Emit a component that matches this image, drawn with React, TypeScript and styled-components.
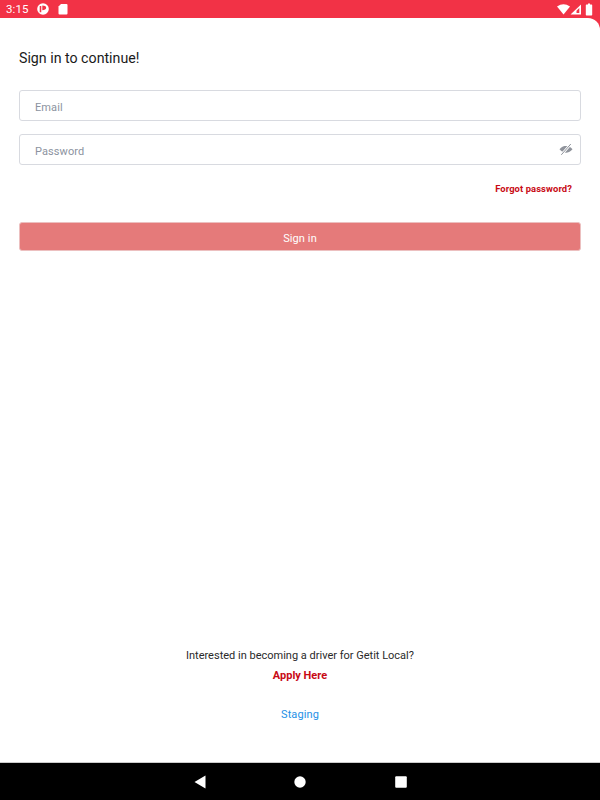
import React from "react";
import styled, { createGlobalStyle } from "styled-components";

const Global = createGlobalStyle`
  html, body { margin: 0; padding: 0; background: #000; }
  body { font-family: Roboto, "Liberation Sans", sans-serif; }
  #root { width: 600px; height: 800px; }
`;
const Screen = styled.div`
  width: 600px; height: 800px; display: flex; flex-direction: column; overflow: hidden;
  background: #f23246;
`;
const StatusBar = styled.div`
  height: 18px; flex: none; display: flex; align-items: center; padding: 0 6px; color: #fff; gap: 9px;
`;
const Time = styled.span`
  font-size: 11.5px; line-height: 18px; letter-spacing: 0.1px; width: 22px;
`;
const StatusRight = styled.div`
  margin-left: auto; display: flex; align-items: center;
`;
const Body = styled.main`
  flex: 1; background: #fff; border-top-right-radius: 12px; padding: 0 19px; display: flex; flex-direction: column;
  border-bottom: 1px solid #ccc;
`;
const Title = styled.h1`
  margin: 31px 0 0; font-size: 14.2px; line-height: 18px; font-weight: 400; color: #1a1a1a;
`;
const Field = styled.div<{ $top: number }>`
  margin-top: ${p => p.$top}px; border: 1px solid #d8dae0; border-radius: 3px; display: flex; align-items: center;
  padding: 0 7px 0 15px; flex: none; box-sizing: content-box; height: 29px;
`;
const Placeholder = styled.span`
  flex: 1; font-size: 11px; color: #8c93a0; letter-spacing: 0.1px; padding-top: 3px;
`;
const Forgot = styled.div`
  margin-top: 18px; align-self: flex-end; padding-right: 9px; font-size: 9.4px; line-height: 12px; font-weight: 700; color: #c80a14; letter-spacing: 0.1px;
`;
const SignIn = styled.button`
  margin-top: 27px; height: 29px; border: 1px solid #ecc0c0; border-radius: 3px; background: #e57a7a; color: #fff;
  font: 400 11px Roboto, sans-serif; letter-spacing: 0.1px; padding: 3px 0 0; flex: none;
`;
const Footer = styled.div`
  margin-top: auto; padding-bottom: 40px; display: flex; flex-direction: column; align-items: center;
`;
const Question = styled.div`
  font-size: 11px; line-height: 14px; color: #2a2a2a;
`;
const Apply = styled.div`
  margin-top: 6px; font-size: 11px; line-height: 14px; font-weight: 700; color: #c80a14;
`;
const Staging = styled.div`
  margin-top: 25px; font-size: 11px; line-height: 14px; color: #1e90e6; letter-spacing: 0.1px;
`;
const NavBar = styled.nav`
  height: 37px; flex: none; background: #000; display: flex; align-items: center; justify-content: center; gap: 88.5px;
`;
const Icon = styled.svg`
  display: block; flex: none;
`;
const Battery = styled(Icon)`
  margin-left: 3px;
`;

export default function App() {
  return (
    <Screen>
      <Global />
      <StatusBar>
        <Time>3:15</Time>
        <Icon width="12" height="12" viewBox="0 0 12 12">
          <circle cx="6" cy="6" r="5.8" fill="#fff" />
          <path d="M2.700 3h1.600v6.200H2.700z M5.300 2.600c2.300 0 3.900.8 3.900 2.200S7.500 7.300 5.300 7.300z" fill="#f23246" />
        </Icon>
        <Icon width="10" height="12" viewBox="0 0 10 12">
          <path d="M3 1h5.500A1 1 0 0 1 9.500 2v8.500a1 1 0 0 1-1 1h-7a1 1 0 0 1-1-1V3.500z" fill="#fff" />
        </Icon>
        <StatusRight>
          <Icon width="13" height="11" viewBox="0 0 13 11">
            <path d="M0 2.500Q6.500-2 13 2.500L6.500 10.500z" fill="#fff" />
          </Icon>
          <Icon width="12" height="11" viewBox="0 0 12 11">
            <path fillRule="evenodd" d="M0.500 10.500L11 0.500V10.500z M6.500 9H9.300V4L6.500 6.700z" fill="#fff" />
          </Icon>
          <Battery width="9" height="13" viewBox="0 0 9 13">
            <path d="M3 0.500h2v1h1.500a.7.7 0 0 1 .7.7v9.600a.7.7 0 0 1-.7.7H1.500a.7.7 0 0 1-.7-.7V2.200a.7.7 0 0 1 .7-.7H3z" fill="#fff" />
          </Battery>
        </StatusRight>
      </StatusBar>
      <Body>
        <Title>Sign in to continue!</Title>
        <Field $top={23}>
          <Placeholder>Email</Placeholder>
        </Field>
        <Field $top={13}>
          <Placeholder>Password</Placeholder>
          <Icon width="14" height="13" viewBox="0 0 14 13">
            <path d="M0.500 6.300C3 3.500 5 3 7 3s4 .5 6.500 3.300C11 9.100 9 9.800 7 9.800S3 9.100.5 6.300z" fill="#8f939b" />
            <path d="M2.300 11.800L11.800 1" stroke="#fff" strokeWidth="2.600" fill="none" />
            <path d="M2.300 11.800L11.800 1" stroke="#8f939b" strokeWidth="1" fill="none" />
          </Icon>
        </Field>
        <Forgot>Forgot password?</Forgot>
        <SignIn>Sign in</SignIn>
        <Footer>
          <Question>Interested in becoming a driver for Getit Local?</Question>
          <Apply>Apply Here</Apply>
          <Staging>Staging</Staging>
        </Footer>
      </Body>
      <NavBar>
        <Icon width="12" height="14" viewBox="0 0 12 14">
          <path d="M0.500 7L11.500 0.500V13.500z" fill="#fff" />
        </Icon>
        <Icon width="12" height="12" viewBox="0 0 12 12">
          <circle cx="6" cy="6" r="5.700" fill="#fff" />
        </Icon>
        <Icon width="12" height="12" viewBox="0 0 12 12">
          <rect x="0.200" y="0.200" width="11.600" height="11.600" rx="1" fill="#fff" />
        </Icon>
      </NavBar>
    </Screen>
  );
}
